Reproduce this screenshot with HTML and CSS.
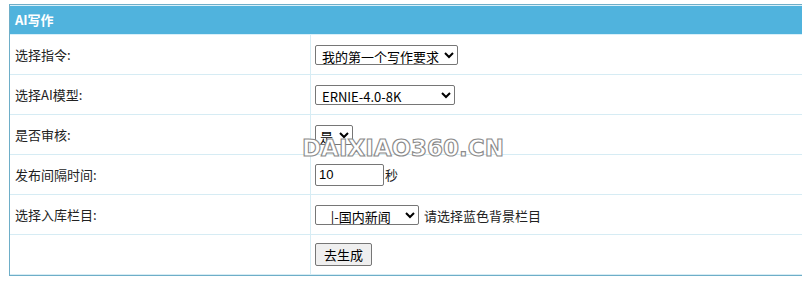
FILE: index.html
```html
<!DOCTYPE html>
<html>
<head>
<meta charset="utf-8">
<link rel="stylesheet" href="styles.css">
</head>
<body>
<div class="wrap">
<table class="form">
  <tr class="head"><th colspan="2">AI写作</th></tr>
  <tr><td class="lbl">选择指令:</td><td class="ctl"><select class="s1"><option>我的第一个写作要求</option></select></td></tr>
  <tr><td class="lbl">选择AI模型:</td><td class="ctl"><select class="s2"><option>ERNIE-4.0-8K</option></select></td></tr>
  <tr><td class="lbl">是否审核:</td><td class="ctl"><select class="s3"><option>是</option></select></td></tr>
  <tr><td class="lbl">发布间隔时间:</td><td class="ctl"><input class="num" type="text" value="10"><span class="unit">秒</span></td></tr>
  <tr><td class="lbl">选择入库栏目:</td><td class="ctl"><select class="s4"><option>&nbsp;&nbsp;&nbsp;|-国内新闻</option></select><span class="hint">请选择蓝色背景栏目</span></td></tr>
  <tr><td class="lbl"></td><td class="ctl"><button class="btn">去生成</button></td></tr>
</table>
<div class="mark">DAIXIAO360.CN</div>
</div>
</body>
</html>
```
FILE: styles.css
```css
html, body { margin: 0; padding: 0; background: #fff; overflow: hidden; }
body { font-family: "Noto Sans CJK SC", "Microsoft YaHei", sans-serif; font-size: 13px; color: #222; }
.wrap { position: relative; padding: 4px 0 0 9px; width: 830px; }
.form { border-collapse: separate; border-spacing: 0; width: 820px; border: 1px solid #6eaec8; }
.head th { background: #50b3dd; color: #fff; font-weight: bold; text-align: left; height: 28px; padding: 0 0 0 5px; font-size: 13px; border-top: 1px solid #d8f0fa; border-bottom: 1px solid #d8f0fa; line-height: 28px; }
.form td { height: 39px; border-bottom: 1px solid #d6ecf4; padding: 0; vertical-align: middle; }
.lbl { width: 295px; padding-left: 5px !important; border-right: 1px solid #d6ecf4; }
.ctl { padding-left: 4px !important; }
select { font-family: "Noto Sans CJK SC", sans-serif; font-size: 13px; height: 20px; border: 1px solid #767676; border-radius: 2px; background: #fff; color: #000; padding: 0 0 0 2px; vertical-align: middle; }
.s1 { width: 143px; }
.s2 { width: 140px; }
.s3 { width: 38px; padding: 0; }
.s4 { width: 104px; }
.num { width: 61px; height: 18px; border: 1px solid #767676; border-radius: 2px; padding: 1px 3px; font-family: "Liberation Sans", sans-serif; font-size: 13px; vertical-align: middle; }
.unit { vertical-align: middle; margin-left: 1px; }
.hint { vertical-align: middle; margin-left: 5px; }
.btn { font-family: "Noto Sans CJK SC", sans-serif; font-size: 13px; height: 23px; width: 57px; padding: 0; border: 1px solid #767676; border-radius: 2px; background: #efefef; color: #000; vertical-align: middle; }
.mark { position: absolute; left: 302px; top: 135px; font-family: "DejaVu Sans", sans-serif; font-weight: bold; font-size: 23px; letter-spacing: 0; color: #fff; -webkit-text-stroke: 1.1px #8a8a8a; line-height: 26px; }
```
